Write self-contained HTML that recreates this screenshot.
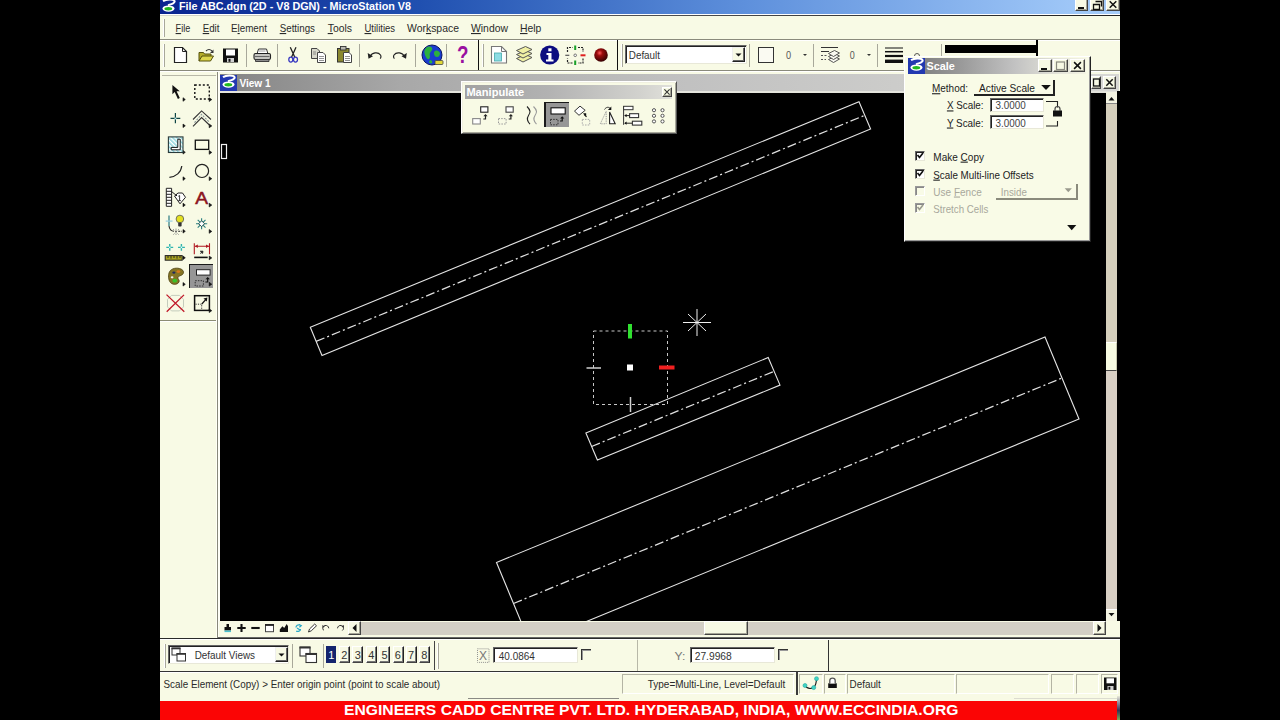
<!DOCTYPE html>
<html><head><meta charset="utf-8"><title>MicroStation V8</title>
<style>
*{box-sizing:border-box;margin:0;padding:0}
html,body{width:1280px;height:720px;overflow:hidden;background:#000}
body{font-family:"Liberation Sans",sans-serif;font-size:11px;color:#1a1a1a;position:relative}
.a,.btn,.sunk{position:absolute}
.btn{background:#f7f9e4;border:1px solid;border-color:#fff #444 #444 #fff;box-shadow:inset -1px -1px 0 #a4a496}
.sunk{background:#fff;border:1px solid;border-color:#666 #e8e8d8 #e8e8d8 #666;box-shadow:inset 1px 1px 0 #222}
svg text{font-family:"Liberation Sans",sans-serif;white-space:pre}
</style></head><body>
<div class="a" style="left:160px;top:0px;width:960px;height:720px;background:#f8fae5"></div>
<div class="a" style="left:160px;top:0px;width:960px;height:14px;background:linear-gradient(90deg,#0a2490 0%,#2050b0 27%,#5e90dc 61%,#a0c8f8 96%,#a6ccf9 100%)"></div>
<div class="a" style="left:160px;top:14px;width:960px;height:1px;background:#fff"></div>
<div class="a" style="left:160px;top:15px;width:960px;height:1px;background:linear-gradient(90deg,#d8d8cc 0%,#b0b0a4 25%,#555 45%,#222 100%)"></div>
<div class="btn" style="left:1075px;top:-3px;width:13px;height:14px;"></div>
<div class="btn" style="left:1090px;top:-3px;width:14px;height:14px;"></div>
<div class="btn" style="left:1106px;top:-3px;width:14px;height:14px;"></div>
<div class="a" style="left:160px;top:39px;width:960px;height:1px;background:#8a8a7c"></div>
<div class="a" style="left:160px;top:40px;width:960px;height:1px;background:#fff"></div>
<div class="a" style="left:160px;top:70px;width:960px;height:1px;background:#8a8a7c"></div>
<div class="a" style="left:160px;top:71px;width:960px;height:1px;background:#fff"></div>
<div class="a" style="left:163px;top:19px;width:1px;height:18px;background:#fff;border-right:1px solid #a8a89a;width:2px"></div>
<div class="a" style="left:163px;top:44px;width:1px;height:23px;background:#fff;border-right:1px solid #a8a89a;width:2px"></div>
<div class="a" style="left:246px;top:44px;width:1px;height:23px;background:#a8a89a"></div>
<div class="a" style="left:277px;top:44px;width:1px;height:23px;background:#a8a89a"></div>
<div class="a" style="left:359px;top:44px;width:1px;height:23px;background:#a8a89a"></div>
<div class="a" style="left:415px;top:44px;width:1px;height:23px;background:#a8a89a"></div>
<div class="a" style="left:446px;top:44px;width:1px;height:23px;background:#a8a89a"></div>
<div class="a" style="left:478px;top:40px;width:1px;height:30px;background:#111"></div>
<div class="a" style="left:482px;top:44px;width:2px;height:23px;background:#fff;border-right:1px solid #a8a89a"></div>
<div class="a" style="left:617px;top:40px;width:1px;height:30px;background:#111"></div>
<div class="a" style="left:621px;top:44px;width:2px;height:23px;background:#fff;border-right:1px solid #a8a89a"></div>
<div class="a" style="left:749px;top:44px;width:1px;height:23px;background:#a8a89a"></div>
<div class="a" style="left:813px;top:44px;width:1px;height:23px;background:#a8a89a"></div>
<div class="a" style="left:877px;top:44px;width:1px;height:23px;background:#a8a89a"></div>
<div class="a" style="left:941px;top:44px;width:1px;height:23px;background:#a8a89a"></div>
<div class="sunk" style="left:625px;top:45px;width:122px;height:19px;"></div>
<div class="btn" style="left:732px;top:47px;width:13px;height:15px;border-color:#eee #222 #222 #eee;box-shadow:inset -1px -1px 0 #666"></div>
<div class="a" style="left:758px;top:47px;width:16px;height:16px;border:1px solid #333;background:#fafaf2"></div>
<div class="a" style="left:945px;top:45px;width:91px;height:8px;background:#000"></div>
<div class="a" style="left:1036px;top:40px;width:2px;height:28px;background:#000"></div>
<div class="a" style="left:162px;top:75px;width:54px;height:1px;background:#b8b8a8"></div>
<div class="a" style="left:189px;top:264px;width:24px;height:24px;background:#969696;border-left:1px solid #1a1a1a;border-top:1px solid #1a1a1a"></div>
<div class="a" style="left:160px;top:320px;width:57px;height:1px;background:#8c8c74"></div>
<div class="a" style="left:160px;top:321px;width:57px;height:1px;background:#fff"></div>
<div class="a" style="left:216px;top:76px;width:1px;height:562px;background:#fffff6"></div>
<div class="a" style="left:217px;top:72px;width:1px;height:566px;background:#88887a"></div>
<div class="a" style="left:218px;top:72px;width:2px;height:566px;background:#fdfdf6"></div>
<div class="a" style="left:219px;top:72px;width:900px;height:2px;background:#f8fae5"></div>
<div class="a" style="left:220px;top:74px;width:899px;height:17px;background:linear-gradient(90deg,#848484 0%,#a8a8a8 20%,#c0c0c0 50%,#d8d8d4 100%)"></div>
<div class="btn" style="left:1091px;top:76px;width:10px;height:13px;"></div>
<div class="btn" style="left:1103px;top:76px;width:13px;height:13px;"></div>
<div class="a" style="left:220px;top:91px;width:899px;height:2px;background:#e4e4dc"></div>
<div class="a" style="left:220px;top:93px;width:886px;height:528px;background:#000"></div>
<div class="a" style="left:1106px;top:93px;width:11px;height:528px;background:#d5cfbc"></div>
<div class="a" style="left:1106px;top:370px;width:11px;height:239px;background:#d8cfc4"></div>
<div class="a" style="left:1106px;top:342px;width:11px;height:29px;background:#f7fae2;border-right:1px solid #c8c8b0;border-bottom:1px solid #444;border-top:1px solid #fff"></div>
<div class="a" style="left:1106px;top:92px;width:11px;height:12px;background:#f4f4e2;border-bottom:1px solid #888"></div>
<div class="a" style="left:1106px;top:609px;width:11px;height:12px;background:#f4f4e2;border-top:1px solid #fff"></div>
<div class="a" style="left:1117px;top:91px;width:3px;height:530px;background:#000"></div>
<div class="a" style="left:219px;top:621px;width:898px;height:17px;background:#f8fae5"></div>
<div class="a" style="left:361px;top:622px;width:732px;height:13px;background:#d3cfc5"></div>
<div class="btn" style="left:704px;top:621px;width:44px;height:14px;border-color:#fff #444 #444 #fff"></div>
<div class="btn" style="left:348px;top:621px;width:13px;height:14px;"></div>
<div class="btn" style="left:1093px;top:621px;width:13px;height:14px;"></div>
<div class="a" style="left:461px;top:81px;width:216px;height:53px;background:#f8fae5;border:1px solid;border-color:#fff #555 #555 #fff;box-shadow:inset 1px 1px 0 #f0f0e0,inset -1px -1px 0 #a8a89a"></div>
<div class="a" style="left:465px;top:85px;width:207px;height:14px;background:linear-gradient(90deg,#a2a2a2 0%,#b2b2b2 40%,#d2d2ce 85%,#e0e0da 100%)"></div>
<div class="btn" style="left:662px;top:87px;width:10px;height:10px;"></div>
<div class="a" style="left:544px;top:102px;width:25px;height:25px;background:#969696;border-left:2px solid #1a1a1a;border-top:1px solid #1a1a1a"></div>
<div class="a" style="left:904px;top:56px;width:187px;height:186px;background:#f9fbe7;border:1px solid;border-color:#fff #222 #222 #fff;box-shadow:inset -1px -1px 0 #999"></div>
<div class="a" style="left:908px;top:58px;width:178px;height:16px;background:linear-gradient(90deg,#787878 0%,#9a9a9a 30%,#c2c2c2 60%,#e4e4da 85%,#f4f4e4 100%)"></div>
<div class="btn" style="left:1038px;top:59px;width:14px;height:13px;"></div>
<div class="btn" style="left:1053px;top:59px;width:15px;height:13px;"></div>
<div class="btn" style="left:1070px;top:59px;width:15px;height:13px;"></div>
<div class="a" style="left:974px;top:80px;width:81px;height:16px;border-right:2px solid #222;border-bottom:2px solid #222"></div>
<div class="sunk" style="left:990px;top:98px;width:54px;height:14px;"></div>
<div class="sunk" style="left:990px;top:115px;width:54px;height:14px;"></div>
<div class="sunk" style="left:915px;top:151px;width:10px;height:10px;"></div>
<div class="sunk" style="left:915px;top:169px;width:10px;height:10px;"></div>
<div class="sunk" style="left:915px;top:186px;width:10px;height:10px;background:#f9fbe7;box-shadow:inset 1px 1px 0 #888;border-color:#999 #fff #fff #999"></div>
<div class="sunk" style="left:915px;top:203px;width:10px;height:10px;background:#f9fbe7;box-shadow:inset 1px 1px 0 #888;border-color:#999 #fff #fff #999"></div>
<div class="a" style="left:996px;top:184px;width:82px;height:16px;border-right:2px solid #8a8a7c;border-bottom:2px solid #8a8a7c"></div>
<div class="a" style="left:160px;top:638px;width:960px;height:1px;background:#2a2a2a"></div>
<div class="a" style="left:218px;top:637px;width:902px;height:1px;background:#666"></div>
<div class="a" style="left:160px;top:639px;width:960px;height:1px;background:#fff"></div>
<div class="a" style="left:164px;top:644px;width:2px;height:24px;background:#fff;border-right:1px solid #a8a89a"></div>
<div class="sunk" style="left:168px;top:645px;width:121px;height:19px;"></div>
<div class="btn" style="left:275px;top:647px;width:13px;height:15px;border-color:#eee #222 #222 #eee;box-shadow:inset -1px -1px 0 #666"></div>
<div class="a" style="left:292px;top:644px;width:1px;height:24px;background:#a8a89a"></div>
<div class="a" style="left:323px;top:644px;width:1px;height:24px;background:#a8a89a"></div>
<div class="a" style="left:434px;top:641px;width:1px;height:29px;background:#444"></div>
<div class="a" style="left:437px;top:643px;width:2px;height:26px;background:#fff;border-right:1px solid #a8a89a"></div>
<div class="a" style="left:326px;top:646px;width:10px;height:17px;background:#14246e"></div>
<div class="btn" style="left:339px;top:646px;width:11px;height:17px;border-right:1px solid #222;box-shadow:inset -1px -1px 0 #777"></div>
<div class="btn" style="left:352px;top:646px;width:11px;height:17px;border-right:1px solid #222;box-shadow:inset -1px -1px 0 #777"></div>
<div class="btn" style="left:366px;top:646px;width:11px;height:17px;border-right:1px solid #222;box-shadow:inset -1px -1px 0 #777"></div>
<div class="btn" style="left:379px;top:646px;width:11px;height:17px;border-right:1px solid #222;box-shadow:inset -1px -1px 0 #777"></div>
<div class="btn" style="left:393px;top:646px;width:11px;height:17px;border-right:1px solid #222;box-shadow:inset -1px -1px 0 #777"></div>
<div class="btn" style="left:406px;top:646px;width:11px;height:17px;border-right:1px solid #222;box-shadow:inset -1px -1px 0 #777"></div>
<div class="btn" style="left:419px;top:646px;width:11px;height:17px;border-right:1px solid #222;box-shadow:inset -1px -1px 0 #777"></div>
<div class="sunk" style="left:493px;top:647px;width:85px;height:16px;"></div>
<div class="sunk" style="left:690px;top:647px;width:85px;height:16px;"></div>
<div class="a" style="left:581px;top:649px;width:10px;height:11px;border-left:1px solid #333;border-top:1px solid #333;box-shadow:inset 1px 1px 0 #999"></div>
<div class="a" style="left:778px;top:649px;width:10px;height:11px;border-left:1px solid #333;border-top:1px solid #333;box-shadow:inset 1px 1px 0 #999"></div>
<div class="a" style="left:637px;top:640px;width:1px;height:31px;background:#b8b8a8"></div>
<div class="a" style="left:828px;top:640px;width:1px;height:31px;background:#333"></div>
<div class="a" style="left:160px;top:671px;width:960px;height:1px;background:#333"></div>
<div class="a" style="left:160px;top:672px;width:960px;height:1px;background:#fff"></div>
<div class="a" style="left:622px;top:674px;width:172px;height:20px;border:1px solid;border-color:#b4b4a4 #fff #fff #b4b4a4"></div>
<div class="a" style="left:847px;top:674px;width:108px;height:20px;border:1px solid;border-color:#b4b4a4 #fff #fff #b4b4a4"></div>
<div class="a" style="left:956px;top:674px;width:93px;height:20px;border:1px solid;border-color:#b4b4a4 #fff #fff #b4b4a4"></div>
<div class="a" style="left:1051px;top:674px;width:23px;height:20px;border:1px solid;border-color:#b4b4a4 #fff #fff #b4b4a4"></div>
<div class="a" style="left:1076px;top:674px;width:23px;height:20px;border:1px solid;border-color:#b4b4a4 #fff #fff #b4b4a4"></div>
<div class="a" style="left:1101px;top:674px;width:17px;height:20px;border:1px solid;border-color:#b4b4a4 #fff #fff #b4b4a4"></div>
<div class="a" style="left:796px;top:671px;width:2px;height:24px;background:#3a3a3a"></div>
<div class="a" style="left:799px;top:674px;width:24px;height:20px;border:1px solid;border-color:#b4b4a4 #fff #fff #b4b4a4"></div>
<div class="a" style="left:824px;top:674px;width:22px;height:20px;border:1px solid;border-color:#b4b4a4 #fff #fff #b4b4a4"></div>
<div class="a" style="left:468px;top:698px;width:151px;height:1px;background:#8a8a84"></div>
<div class="a" style="left:1014px;top:698px;width:103px;height:1px;background:#dcdcd0"></div>
<div class="a" style="left:160px;top:701px;width:957px;height:19px;background:#fb0505"></div>
<div class="a" style="left:1117px;top:696px;width:3px;height:24px;background:linear-gradient(180deg,#e8e8d8 0%,#889 30%,#335 60%,#7a5 100%)"></div>
<svg class="a" style="left:0;top:0" width="1280" height="720" viewBox="0 0 1280 720">
<defs><clipPath id="cv"><rect x="220" y="93" width="886" height="528"/></clipPath></defs>
<g clip-path="url(#cv)" fill="none" stroke="#e4e4e4" stroke-width="1.1">
<polygon points="310.3,327.2 859.0,101.7 870.6,129.0 322.0,355.5"/>
<line x1="316.1" y1="341.4" x2="864.8" y2="115.3" stroke-dasharray="9 3 2 3" stroke="#e0e0e0" stroke-width="1.25"/>
<polygon points="585.9,433.0 768.2,357.5 780.0,385.1 597.4,460.0"/>
<line x1="591.6" y1="446.5" x2="774.1" y2="371.3" stroke-dasharray="9 3 2 3" stroke="#e0e0e0" stroke-width="1.25"/>
<polygon points="496.5,562.5 1045.0,337.0 1079.0,419.0 530.5,644.5"/>
<line x1="513.5" y1="603.5" x2="1062.0" y2="378.0" stroke-dasharray="9 3 2 3" stroke="#e0e0e0" stroke-width="1.25"/>
</g>
<rect x="593.5" y="331" width="74" height="73.5" fill="none" stroke="#c8c8c8" stroke-width="1" stroke-dasharray="3 3"/>
<rect x="627" y="364.5" width="6" height="6" fill="#fff"/>
<rect x="628" y="324" width="4" height="14.5" fill="#30e030"/>
<rect x="659" y="365.5" width="15.5" height="4" fill="#f02020"/>
<path d="M586.5,368h14.500M630.500,397v15" stroke="#d0d0d0" stroke-width="1.500"/>
<path d="M683,322.5h28M697,309v27M688,314l18,17M706,314l-18,17" stroke="#f0f0f0" stroke-width="1" fill="none"/>
<rect x="221.5" y="144.500" width="5" height="14" fill="none" stroke="#f0f0f0" stroke-width="1.2"/>
<g transform="translate(160,-1)">
<path d="M3,2.2 C6,0.2 13,-0.2 14.5,2 C15.5,4 11,5.2 8,6.2" fill="none" stroke="#fff" stroke-width="2"/>
<ellipse cx="8.5" cy="9.6" rx="6" ry="3.2" fill="#fff"/>
<ellipse cx="8.3" cy="9.7" rx="3.9" ry="1.7" fill="#20b820"/>
</g>
<g transform="translate(220,75)">
<rect x="0" y="0" width="17" height="16" fill="#2238b0"/>
<path d="M3,2.2 C6,0.2 13,-0.2 14.5,2 C15.5,4 11,5.2 8,6.2" fill="none" stroke="#fff" stroke-width="2"/>
<ellipse cx="8.5" cy="9.6" rx="6" ry="3.2" fill="#fff"/>
<ellipse cx="8.3" cy="9.7" rx="3.9" ry="1.7" fill="#20b820"/>
</g>
<g transform="translate(908,58)">
<rect x="0" y="0" width="17" height="16" fill="#2238b0"/>
<path d="M3,2.2 C6,0.2 13,-0.2 14.5,2 C15.5,4 11,5.2 8,6.2" fill="none" stroke="#fff" stroke-width="2"/>
<ellipse cx="8.5" cy="9.6" rx="6" ry="3.2" fill="#fff"/>
<ellipse cx="8.3" cy="9.7" rx="3.9" ry="1.7" fill="#20b820"/>
</g>
<rect x="1078" y="7" width="6" height="2" fill="#111"/>
<path d="M1095.5,1.500h6v5M1093.5,4.500h6v5h-6z" fill="none" stroke="#111" stroke-width="1.3"/>
<path d="M1109.7,1.2000000000000002L1116.3,7.8M1116.3,1.2000000000000002L1109.7,7.8" stroke="#111" stroke-width="1.5" fill="none"/>
<rect x="1093.5" y="79" width="6" height="7" fill="none" stroke="#111" stroke-width="1.3"/>
<path d="M1106.3,79.3L1112.7,85.7M1112.7,79.3L1106.3,85.7" stroke="#111" stroke-width="1.5" fill="none"/>
<path d="M664.4,89.4L669.6,94.6M669.6,89.4L664.4,94.6" stroke="#333" stroke-width="1.1" fill="none"/>
<rect x="1041" y="68" width="6" height="2" fill="#111"/>
<rect x="1056.5" y="62" width="8" height="7.500" fill="none" stroke="#8a8a80" stroke-width="1.2"/>
<path d="M1074.1,62.1L1080.9,68.9M1080.9,62.1L1074.1,68.9" stroke="#111" stroke-width="1.5" fill="none"/>
<polygon points="735.5,53.5 741.5,53.5 738.5,56.5" fill="#111"/>
<polygon points="803,54 807,54 805,56" fill="#333"/>
<polygon points="867,54 871,54 869,56" fill="#333"/>
<polygon points="1041.2,85 1050.8,85 1046,90" fill="#111"/>
<polygon points="1064.7,188.3 1071.8999999999999,188.3 1068.3,192.3" fill="#9a9a8e"/>
<polygon points="1067.1000000000001,225 1076.3,225 1071.7,230.2" fill="#111"/>
<polygon points="278.5,653.5 284.5,653.5 281.5,656.5" fill="#111"/>
<polygon points="1108.500,100.500 1114.500,100.500 1111.500,97" fill="#111"/>
<polygon points="1108.5,613 1114.5,613 1111.5,616.2" fill="#111"/>
<polygon points="356.5,624 352.5,628 356.5,632" fill="#111"/>
<polygon points="1097.5,624 1101.5,628 1097.5,632" fill="#111"/>
<path d="M917.5,155l2,2.500l3.500,-4.500" fill="none" stroke="#111" stroke-width="1.7"/>
<path d="M917.5,173l2,2.500l3.500,-4.500" fill="none" stroke="#111" stroke-width="1.7"/>
<path d="M917.5,207l2,2.500l3.500,-4.500" fill="none" stroke="#9a9a8e" stroke-width="1.7"/>
<path d="M1046,101.500h11.500v6M1046,126h11.500v-5" fill="none" stroke="#222" stroke-width="1.1"/>
<rect x="1053" y="110.500" width="9" height="6" fill="#111"/><path d="M1055,111v-2a2.500,2.500 0 0 1 5,0v2" fill="none" stroke="#444" stroke-width="1.2"/>
<!-- ===== main toolbar icons ===== -->
<g id="tb" stroke-linejoin="miter">
<!-- new -->
<path d="M174.500,47.500h8l4,4v11h-12z" fill="#fff" stroke="#222" stroke-width="1.2"/><path d="M182.500,47.500v4h4" fill="none" stroke="#222" stroke-width="1"/>
<!-- open -->
<path d="M199,61v-8.500h4.500l1,1.500h6.500v2" fill="#b4ac28" stroke="#55500c" stroke-width="1"/>
<path d="M199,61l3,-5h11.500l-3,5z" fill="#ddd64a" stroke="#55500c" stroke-width="1"/>
<path d="M206,51q3,-3 6,0" fill="none" stroke="#333" stroke-width="1.1"/><path d="M213.500,49.500v3.500h-3.500z" fill="#333"/>
<!-- save -->
<rect x="223" y="48.500" width="15" height="14" fill="#111"/><rect x="226" y="49.500" width="9" height="6" fill="#fff"/><rect x="227" y="58" width="7" height="4" fill="#d0d0d0"/><rect x="228.500" y="58.800" width="2" height="3" fill="#111"/>
<!-- print -->
<path d="M257,54l1.500,-5h8l1.500,5" fill="#fff" stroke="#333" stroke-width="1"/>
<rect x="254" y="53.500" width="16.500" height="6" rx="1.500" fill="#c4c4c0" stroke="#222" stroke-width="1.100"/><path d="M255,56.500h14.500" stroke="#666" stroke-width="1"/>
<path d="M255.500,59.500h13.500v2h-13.500z" fill="#8c8c8c" stroke="#333" stroke-width="0.900"/><path d="M259,51h6.500" stroke="#888" stroke-width="0.800"/>
<!-- cut -->
<path d="M290.300,47.200l4.500,10M296,47.200l-4.500,10" stroke="#222" stroke-width="1.300" fill="none"/>
<ellipse cx="290.800" cy="59.600" rx="2" ry="2.500" fill="none" stroke="#3838c0" stroke-width="1.300"/><ellipse cx="295.500" cy="59.600" rx="2" ry="2.500" fill="none" stroke="#3838c0" stroke-width="1.300"/>
<!-- copy -->
<path d="M311.500,48.500h5.500l2.500,2.500v7.500h-8z" fill="#d8d8cc" stroke="#444" stroke-width="1"/>
<path d="M317.500,52.500h5.500l2.500,2.500v7.500h-8z" fill="#fff" stroke="#444" stroke-width="1"/><path d="M319,56.500h5M319,58.500h5M319,60.500h5M313,52h3M313,54h3" stroke="#777" stroke-width="0.800"/>
<!-- paste -->
<rect x="337.500" y="48.500" width="11.500" height="13.500" fill="#8a8830" stroke="#333" stroke-width="1"/><rect x="340.500" y="46.500" width="5.500" height="3.500" fill="#b8b8b0" stroke="#333" stroke-width="0.900"/>
<path d="M343.500,52.500h5.500l2.500,2.500v7.500h-8z" fill="#fff" stroke="#444" stroke-width="1"/><path d="M345,56.500h5M345,58.500h5M345,60.500h5" stroke="#777" stroke-width="0.800"/>
<!-- undo / redo -->
<path d="M370,56.500c2,-4 8,-5 10.500,-1.500c0.800,1.200 0.500,3 -0.500,3.500" fill="none" stroke="#222" stroke-width="1.200"/><path d="M367.700,53l0.800,5.800l4.500,-2.500z" fill="#222"/>
<path d="M404.500,56.500c-2,-4 -8,-5 -10.500,-1.500c-0.800,1.200 -0.500,3 0.500,3.500" fill="none" stroke="#222" stroke-width="1.200"/><path d="M406.800,53l-0.800,5.800l-4.500,-2.500z" fill="#222"/>
<!-- globe -->
<circle cx="432" cy="55" r="10" fill="#1a3cd0" stroke="#0a1460" stroke-width="1"/>
<path d="M426,48c2,-2 5,-2 6,0c1,2 -1,3 -2,5c-1,2 1,4 -1,6c-2,1 -3,-2 -4,-4c-1,-3 -1,-5 1,-7z" fill="#2cb040"/>
<path d="M435,51c2,-1 4,0 5,2c0,2 -1,4 -3,4c-2,0 -3,-2 -3,-3.500c0,-1 0,-2 1,-2.500z" fill="#2cb040"/><path d="M430,60c1,0 3,1 2,3c-1,1 -3,0 -3,-1z" fill="#2cb040"/>
<rect x="435" y="60.500" width="8" height="4" rx="1" fill="#e0d838" stroke="#444" stroke-width="0.800"/>
<!-- page cyan -->
<path d="M491.500,46.500h10l5,5v11.500h-15z" fill="#fff" stroke="#777" stroke-width="1.100"/><path d="M501.500,46.500v5h5" fill="none" stroke="#777" stroke-width="1"/>
<rect x="494.500" y="53" width="7" height="8" fill="#8cdce4" stroke="#4aa" stroke-width="0.800"/>
<!-- layers -->
<g fill="#f0f0a4" stroke="#555" stroke-width="1"><path d="M516.500,58.500l9,-4l6.500,3l-9,4.500z"/><path d="M516.500,54.500l9,-4l6.500,3l-9,4.500z"/><path d="M516.500,50.500l9,-4l6.500,3l-9,4.500z"/></g>
<!-- info -->
<circle cx="549.700" cy="55" r="9.600" fill="#0c0c80"/>
<rect x="548.300" y="48.300" width="3.200" height="3" fill="#fff"/><path d="M546.500,53h5v6.500h2v2h-7.500v-2h2.300v-4.500h-1.800z" fill="#fff"/>
<!-- accusnap bracket -->
<path d="M567.500,52v-4.500h5M578,47.500h5v4.500M583,58.500v4.500h-5M572.500,63h-5v-4.500" fill="none" stroke="#222" stroke-width="1.200" stroke-dasharray="2 1"/>
<rect x="574.200" y="45.500" width="2" height="4.500" fill="#18a028"/><rect x="574.200" y="60.500" width="2" height="4.500" fill="#18a028"/><rect x="580.500" y="54.300" width="5" height="2" fill="#e02020"/><rect x="565.300" y="54.700" width="4" height="1.200" fill="#555"/>
<circle cx="575.200" cy="55.300" r="1.300" fill="#fff" stroke="#555" stroke-width="0.800"/>
<!-- red ball -->
<defs><radialGradient id="rb" cx="0.400" cy="0.350" r="0.700"><stop offset="0" stop-color="#ff5a5a"/><stop offset="0.300" stop-color="#9c0c0c"/><stop offset="1" stop-color="#2c0000"/></radialGradient></defs>
<circle cx="601" cy="55" r="6.800" fill="url(#rb)"/>
<!-- level filter icon -->
<path d="M821,47.500h17M821,51.500h8" stroke="#333" stroke-width="1" fill="none"/><path d="M821,55.500h6M821,59.500h5" stroke="#555" stroke-width="1" stroke-dasharray="2 1.500" fill="none"/>
<g fill="#f8f8f0" stroke="#444" stroke-width="0.900"><path d="M828.500,59.500l6,-3l5,2.500l-6,3.500z"/><path d="M828.500,56.500l6,-3l5,2.500l-6,3.500z"/><path d="M828.500,53.500l6,-3l5,2.500l-6,3.500z"/></g>
<!-- weights -->
<path d="M885,48h18" stroke="#111" stroke-width="1"/><path d="M885,51.700h18" stroke="#111" stroke-width="1.500"/><path d="M885,56h18" stroke="#111" stroke-width="2.200"/><path d="M885,61.300h18" stroke="#111" stroke-width="3.400"/>
<path d="M914.500,56a2.500,2.500 0 0 1 5,0" fill="none" stroke="#555" stroke-width="1"/>
</g>
<!-- ===== left toolbox ===== -->
<g id="lt">
<!-- flyout marks -->
<g fill="#111" stroke="#111" stroke-width="0.6">
<polygon points="183,97.700 185.300,99.500 183,101.300"/><polygon points="209.200,97.700 211.800,99.600 209.200,101.500"/>
<polygon points="183,124 185.300,125.800 183,127.600"/><polygon points="209.200,124 211.800,125.900 209.200,127.800"/>
<polygon points="183,150.500 185.300,152.300 183,154.100"/><polygon points="209.200,150.500 211.800,152.400 209.200,154.300"/>
<polygon points="183,176.800 185.300,178.600 183,180.400"/><polygon points="209.200,176.800 211.800,178.700 209.200,180.600"/>
<polygon points="183,203.200 185.300,205 183,206.800"/><polygon points="209.200,203.200 211.800,205.100 209.200,207"/>
<polygon points="183,229.500 185.300,231.300 183,233.100"/><polygon points="209.200,229.500 211.800,231.400 209.200,233.300"/>
<polygon points="183,256 185.300,257.800 183,259.600"/><polygon points="209.200,256 211.800,257.900 209.200,259.800"/>
<polygon points="183,282.500 185.300,284.300 183,286.100"/><polygon points="209.200,282.300 211.800,284.200 209.200,286.100"/>
<polygon points="209.200,308.800 211.800,310.700 209.200,312.600"/>
</g>
<!-- r1: arrow, fence -->
<path d="M172.400,85v9.200l2.300,-2.200l3.200,7l1.900,-0.900l-3.200,-6.800h3.200z" fill="#111"/>
<rect x="194.800" y="85" width="14.500" height="14" fill="none" stroke="#111" stroke-width="1.400" stroke-dasharray="2 2"/>
<!-- r2: point, smartline -->
<path d="M170.500,118.400h9.800M175.400,113v10.300" stroke="#0e4444" stroke-width="1.200"/><circle cx="175.400" cy="118.400" r="1" fill="#bfe8e8"/>
<path d="M193,119.500l8.600,-8.600l9.400,8.600" fill="none" stroke="#333" stroke-width="1.100"/>
<path d="M194.500,122.600l7.100,-8.300l7.800,8" fill="none" stroke="#8a9a9a" stroke-width="1.100" stroke-dasharray="2 1.200"/>
<path d="M193,126.300l8.600,-8.700l8.300,7.900" fill="none" stroke="#333" stroke-width="1.100"/>
<!-- r3: hatch, block -->
<defs><pattern id="ht" width="3" height="3" patternUnits="userSpaceOnUse" patternTransform="rotate(-45)"><rect width="3" height="3" fill="#fff"/><rect width="1.500" height="3" fill="#8cd4dc"/></pattern></defs>
<rect x="168.400" y="136.900" width="14.600" height="15.600" fill="url(#ht)" stroke="#2a3a3a" stroke-width="1.100"/>
<path d="M177.800,139.200h2.400v10.600h-9v-2.400h6.600z" fill="#fff" stroke="#111" stroke-width="1"/>
<rect x="195.300" y="140.200" width="13.400" height="9.200" fill="none" stroke="#111" stroke-width="1.300"/>
<!-- r4: arc, circle -->
<path d="M169.400,177.300C176,176.800 181,172.500 181.800,166" fill="none" stroke="#222" stroke-width="1.200"/>
<circle cx="202" cy="170.900" r="6.600" fill="none" stroke="#222" stroke-width="1.200"/>
<!-- r5: tags, text(A is text) -->
<path d="M166.300,188.300h5.300v18h-5.300zM166.300,191.300h5.300M166.300,194.300h5.300M166.300,197.300h5.300M166.300,200.300h5.300M166.300,203.300h5.300" fill="#fff" stroke="#222" stroke-width="1"/>
<path d="M171.600,191.500l4.200,3.500" stroke="#222" stroke-width="1"/>
<path d="M174.500,196l3.500,-3h4.500l3,4.300l-5.500,6.500z" fill="#fff" stroke="#222" stroke-width="1"/><path d="M178.300,196.300l1.300,-0.800v5M178.300,200.600h2.600" fill="none" stroke="#222" stroke-width="0.900"/><circle cx="176.200" cy="195.200" r="0.900" fill="#111"/>
<!-- r6: bulb, sun -->
<path d="M169,215.500v10.500" stroke="#2a7a80" stroke-width="1.200"/><path d="M165.700,221.100h6.800" stroke="#9ad0e0" stroke-width="1.200"/>
<path d="M169,226c0.500,3.500 2.500,5.200 5,5.300" fill="none" stroke="#222" stroke-width="1.100"/><path d="M175,231.300h7" stroke="#222" stroke-width="1.100" stroke-dasharray="2 1.200"/>
<path d="M173,229l6,6M179,229l-6,6M176,228.500v7" stroke="#777" stroke-width="0.700" stroke-dasharray="1.500 1"/>
<circle cx="179.900" cy="219" r="3.800" fill="#e4e020" stroke="#555" stroke-width="0.800"/><rect x="178.200" y="222.400" width="3.400" height="4.200" rx="0.800" fill="#333"/>
<path d="M196,223.750h11.200M201.600,218.200v11.100M197.700,219.800l7.800,7.900M205.500,219.800l-7.800,7.900" stroke="#2a8080" stroke-width="1.100"/><rect x="199.500" y="221.650" width="4.200" height="4.200" fill="#fff" stroke="#1a4a4a" stroke-width="0.900" transform="rotate(45 201.600 223.750)"/>
<!-- r7: measure, dimension -->
<path d="M166.300,247.400h6.900M169.750,244v6.800M178,247.400h6.900M181.400,244v6.800" stroke="#30b4ac" stroke-width="1.400"/><circle cx="169.750" cy="247.400" r="0.800" fill="#dff"/><circle cx="181.400" cy="247.400" r="0.800" fill="#dff"/>
<rect x="165.200" y="255.600" width="17" height="4.600" fill="#a8a420" stroke="#222" stroke-width="1"/><path d="M168,256v2M171,256v2.600M174,256v2M177,256v2.600M180,256v2" stroke="#222" stroke-width="0.900"/>
<path d="M194.300,243.300v11M209.500,243.300v11M195,246.300h14" stroke="#b01822" stroke-width="1.100" fill="none"/><path d="M194.800,246.300l3,-1.800v3.600zM209,246.300l-3,-1.800v3.600z" fill="#b01822"/>
<path d="M194.200,257.400h13.500" stroke="#111" stroke-width="1.600"/><path d="M200.500,254l1.300,-2.500M200.300,251.200h2.700l-0.400,2.200z" stroke="#222" stroke-width="0.800" fill="#222"/>
<!-- r8: palette, (selected) scale -->
<path d="M169,273c1,-4 6,-5.600 10.500,-4.500c4,1 5,4 3,6c-1.500,1.500 -4,1 -4.500,3c-0.500,1.500 2,2.500 1,4.500c-1,2.500 -5,3 -7.500,1.500c-3,-2 -3.500,-7 -2.500,-10.500z" fill="#857524" stroke="#4a4010" stroke-width="0.800"/>
<ellipse cx="178.400" cy="271.600" rx="1.900" ry="1.300" fill="#d8781c"/><ellipse cx="173.900" cy="272.600" rx="1.500" ry="1.200" fill="#222a60"/><ellipse cx="172.100" cy="277.300" rx="1.400" ry="1.100" fill="#f4f4f4"/><ellipse cx="174.800" cy="280.700" rx="2.400" ry="1.900" fill="#38c028"/>
<rect x="196.500" y="269.700" width="13.600" height="5.400" fill="#fff" stroke="#222" stroke-width="1"/>
<rect x="195.200" y="280.700" width="8.200" height="5.300" fill="none" stroke="#333" stroke-width="1" stroke-dasharray="1.500 1.200"/>
<path d="M205.400,282h2.300v-3.500" fill="none" stroke="#111" stroke-width="1.200"/><path d="M205.500,279.200l2.200,-2.200l2.200,2.200z" fill="#111"/>
<!-- r9: delete, change -->
<path d="M171.500,295.400h8l4,4v7.500l-4,4h-8l-4,-4v-7.500z" fill="none" stroke="#c4ccbc" stroke-width="1"/>
<path d="M166.500,294.600l17.800,17.100M184,294.900l-17.300,16.900" stroke="#c01828" stroke-width="1.300"/>
<rect x="194.600" y="295.700" width="14.800" height="14.700" fill="none" stroke="#111" stroke-width="1.500"/>
<path d="M201.800,304l4.600,-5.200" stroke="#111" stroke-width="1.200"/><path d="M207.400,297.600l-0.600,4l-3.300,-3.200z" fill="#111"/>
<path d="M195.500,304.200h6.200v5.500" fill="none" stroke="#333" stroke-width="1" stroke-dasharray="1.200 1.200"/>
</g>
<!-- ===== Manipulate icons ===== -->
<g id="mp">
<rect x="480.700" y="106.800" width="7.200" height="5.400" fill="#fff" stroke="#222" stroke-width="1.100"/><rect x="472.700" y="118.600" width="7.600" height="5.400" fill="#fff" stroke="#888" stroke-width="1.100"/>
<path d="M483.300,119h2.200v-3.400" fill="none" stroke="#222" stroke-width="1.200"/><path d="M483.400,116.300l2.100,-2.200l2.100,2.200z" fill="#222"/>
<rect x="506" y="106.800" width="7.200" height="5.400" fill="#fff" stroke="#444" stroke-width="1.100"/><rect x="498.500" y="118.600" width="7.600" height="5.400" fill="none" stroke="#999" stroke-width="1" stroke-dasharray="1.500 1.200"/>
<path d="M508.700,119h2.200v-3.400" fill="none" stroke="#222" stroke-width="1.200"/><path d="M508.800,116.300l2.100,-2.200l2.100,2.200z" fill="#222"/>
<path d="M527,106.500c4,4 3.500,6 1.500,9c-2,3 -1.500,5.500 1.500,8.700" fill="none" stroke="#222" stroke-width="1.100"/><path d="M533.500,106.500c4,4 3.500,6 1.500,9c-2,3 -1.500,5.500 1.500,8.700" fill="none" stroke="#999" stroke-width="1.100"/>
<rect x="551" y="107.800" width="14.200" height="6.200" fill="#fff" stroke="#111" stroke-width="1.100"/><rect x="550.500" y="119.400" width="7.500" height="5.400" fill="none" stroke="#333" stroke-width="1" stroke-dasharray="1.500 1.200"/>
<path d="M560,121h2.200v-3.200" fill="none" stroke="#111" stroke-width="1.200"/><path d="M560.100,118.500l2.100,-2.200l2.100,2.200z" fill="#111"/>
<path d="M574.500,111.100l5.500,-5l5.200,4.200l-6.200,5z" fill="#fff" stroke="#333" stroke-width="1"/><path d="M583,113.300h3.200v3.200z" fill="#111"/><path d="M584,114.300l2.500,2.500" stroke="#111" stroke-width="1.100"/>
<rect x="582.300" y="119.400" width="7.400" height="5.600" fill="none" stroke="#aaa" stroke-width="1" stroke-dasharray="1.500 1.200"/>
<path d="M600.300,123.800l5.900,-12.500v12.500z" fill="none" stroke="#999" stroke-width="1" stroke-dasharray="1.300 1"/><path d="M609.600,112v11.800h5.600z" fill="#fff" stroke="#222" stroke-width="1.100"/>
<path d="M604.500,109.500c1.500,-2.500 4,-2.800 5.500,-1.300" fill="none" stroke="#333" stroke-width="1"/><path d="M611.300,106.600v3.400h-3.400z" fill="#111"/>
<path d="M623.600,106v18.800" stroke="#333" stroke-width="1"/><rect x="623.600" y="106.300" width="9.400" height="3.400" fill="#fff" stroke="#333" stroke-width="1"/><rect x="629.600" y="113.700" width="9" height="3.900" fill="#fff" stroke="#333" stroke-width="1.100"/><rect x="632.400" y="121.200" width="9.400" height="3.900" fill="#fff" stroke="#333" stroke-width="1.100"/>
<path d="M625,115.600h4.500M625,123.200h7" stroke="#222" stroke-width="1"/><path d="M624.200,115.600l2.400,-1.600v3.200zM624.200,123.200l2.400,-1.600v3.200z" fill="#111"/>
<g fill="#fff" stroke="#444" stroke-width="0.900"><circle cx="654" cy="110.200" r="1.600"/><circle cx="662.500" cy="110.200" r="1.600"/><circle cx="654" cy="115.800" r="1.600"/><circle cx="662.500" cy="115.800" r="1.600"/><circle cx="654" cy="121.400" r="1.600"/><circle cx="662.500" cy="121.400" r="1.600"/></g>
</g>
<!-- ===== view controls ===== -->
<g id="vc">
<path d="M226.500,624v3h-2v3.500h6.500v-3.500h-2v-3z" fill="#111"/><rect x="224.500" y="630.500" width="6.500" height="1.600" fill="#48c0d0"/>
<path d="M237.300,628h8.400M241.500,624v8" stroke="#111" stroke-width="2.100"/>
<path d="M251.300,628h8.400" stroke="#111" stroke-width="2.100"/>
<rect x="265.500" y="624.500" width="8" height="7.200" fill="#fff" stroke="#444" stroke-width="1"/><path d="M265,625h9" stroke="#222" stroke-width="1.800"/>
<path d="M279.800,632v-2.500l2.600,-3.200l1.800,1.800l2.500,-4l1.300,2.200v5.700z" fill="#111"/>
<path d="M296,627.500c0,-2 2,-3.200 3.800,-2.500M300.500,629c0,2 -2.500,3 -4.300,2M299,624.500l2.200,1.200l-1.800,1.500M297,628l3,2" fill="none" stroke="#28a8c8" stroke-width="1.300"/>
<path d="M308.500,632l1,-3l5.200,-5l1.800,1.800l-5.200,5z" fill="#fff" stroke="#222" stroke-width="0.900"/>
<path d="M324,630.500c-2,-1.500 -1.500,-4.500 1,-5c2,-0.400 3.600,0.800 3.800,2.800" fill="none" stroke="#333" stroke-width="1"/><path d="M322.300,625l0.200,2.800l2.500,-1z" fill="#333"/>
<path d="M342.300,630.500c2,-1.500 1.500,-4.500 -1,-5c-2,-0.400 -3.600,0.800 -3.800,2.800" fill="none" stroke="#333" stroke-width="1"/><path d="M344,625l-0.200,2.800l-2.500,-1z" fill="#333"/>
</g>
<!-- ===== bottom bar icons ===== -->
<g id="bb">
<rect x="172" y="648" width="8" height="7" fill="#fff" stroke="#333" stroke-width="1"/><path d="M171.500,648.500h9" stroke="#333" stroke-width="1.600"/><rect x="177" y="653.500" width="8.500" height="7.500" fill="#fff" stroke="#333" stroke-width="1"/><path d="M176.500,654h9.500" stroke="#333" stroke-width="1.600"/>
<rect x="300" y="647" width="10" height="9" fill="#fff" stroke="#333" stroke-width="1.100"/><path d="M299.500,647.600h11" stroke="#333" stroke-width="1.800"/><rect x="306" y="653.500" width="10.500" height="9" fill="#fff" stroke="#333" stroke-width="1.100"/><path d="M305.500,654.100h11.500" stroke="#333" stroke-width="1.800"/>
<rect x="477.500" y="648.800" width="11.500" height="13.600" fill="none" stroke="#888" stroke-width="0.900" stroke-dasharray="1 1"/>
<!-- status: snap icon, lock, save -->
<path d="M805,685.500c2,3 5.500,3.500 8.700,2.100c2.300,-2.500 2.800,-5.500 2.800,-9" fill="none" stroke="#111" stroke-width="1.100"/><circle cx="805" cy="685.500" r="2" fill="#40d4c4" stroke="#20a8a0" stroke-width="0.600"/><circle cx="813.700" cy="687.600" r="2" fill="#40d4c4" stroke="#20a8a0" stroke-width="0.600"/><circle cx="816.500" cy="678.700" r="2" fill="#40d4c4" stroke="#20a8a0" stroke-width="0.600"/>
<rect x="828.200" y="683.300" width="8.600" height="4.700" fill="#111"/><path d="M829.800,683.500v-3a2.600,2.300 0 0 1 5.400,0v3" fill="#fff" stroke="#555" stroke-width="1.300"/>
<rect x="1104" y="677.500" width="12.500" height="12.500" fill="#111"/><rect x="1106.500" y="678.300" width="7.500" height="5" fill="#fff"/><rect x="1107.500" y="686" width="6" height="4" fill="#d0d0d0"/><rect x="1108.500" y="686.800" width="1.800" height="2.800" fill="#111"/>
</g>

<g>
<text x="179" y="9.6" font-size="11" font-weight="bold" fill="#fff" textLength="232.0" lengthAdjust="spacingAndGlyphs">File ABC.dgn (2D - V8 DGN) - MicroStation V8</text>
<text x="175.6" y="32" font-size="11" font-weight="normal" fill="#2a2a2a" textLength="14.6" lengthAdjust="spacingAndGlyphs"><tspan text-decoration="underline">F</tspan>ile</text>
<text x="202.7" y="32" font-size="11" font-weight="normal" fill="#2a2a2a" textLength="16.8" lengthAdjust="spacingAndGlyphs"><tspan text-decoration="underline">E</tspan>dit</text>
<text x="231" y="32" font-size="11" font-weight="normal" fill="#2a2a2a" textLength="36.0" lengthAdjust="spacingAndGlyphs">E<tspan text-decoration="underline">l</tspan>ement</text>
<text x="279.7" y="32" font-size="11" font-weight="normal" fill="#2a2a2a" textLength="35.3" lengthAdjust="spacingAndGlyphs"><tspan text-decoration="underline">S</tspan>ettings</text>
<text x="327.7" y="32" font-size="11" font-weight="normal" fill="#2a2a2a" textLength="24.3" lengthAdjust="spacingAndGlyphs"><tspan text-decoration="underline">T</tspan>ools</text>
<text x="364.5" y="32" font-size="11" font-weight="normal" fill="#2a2a2a" textLength="30.5" lengthAdjust="spacingAndGlyphs"><tspan text-decoration="underline">U</tspan>tilities</text>
<text x="407" y="32" font-size="11" font-weight="normal" fill="#2a2a2a" textLength="52.0" lengthAdjust="spacingAndGlyphs">Wor<tspan text-decoration="underline">k</tspan>space</text>
<text x="471" y="32" font-size="11" font-weight="normal" fill="#2a2a2a" textLength="37.0" lengthAdjust="spacingAndGlyphs"><tspan text-decoration="underline">W</tspan>indow</text>
<text x="520" y="32" font-size="11" font-weight="normal" fill="#2a2a2a" textLength="21.4" lengthAdjust="spacingAndGlyphs"><tspan text-decoration="underline">H</tspan>elp</text>
<text x="239.4" y="86.9" font-size="11" font-weight="bold" fill="#fff" textLength="31.2" lengthAdjust="spacingAndGlyphs">View 1</text>
<text x="466.4" y="96.2" font-size="11" font-weight="bold" fill="#fff" textLength="57.9" lengthAdjust="spacingAndGlyphs">Manipulate</text>
<text x="926.5" y="69.7" font-size="11" font-weight="bold" fill="#fff" textLength="28.2" lengthAdjust="spacingAndGlyphs">Scale</text>
<text x="628.8" y="59.2" font-size="11" font-weight="normal" fill="#333" textLength="31.2" lengthAdjust="spacingAndGlyphs">Default</text>
<text x="785.9" y="59.2" font-size="11" font-weight="normal" fill="#555" textLength="5.1" lengthAdjust="spacingAndGlyphs">0</text>
<text x="849.7" y="59.2" font-size="11" font-weight="normal" fill="#555" textLength="5.0" lengthAdjust="spacingAndGlyphs">0</text>
<text x="932" y="92.2" font-size="11" font-weight="normal" fill="#222" textLength="36.0" lengthAdjust="spacingAndGlyphs"><tspan text-decoration="underline">M</tspan>ethod:</text>
<text x="979" y="92.2" font-size="11" font-weight="normal" fill="#222" textLength="56.0" lengthAdjust="spacingAndGlyphs">Active Scale</text>
<text x="946.9" y="109.4" font-size="11" font-weight="normal" fill="#222" textLength="36.7" lengthAdjust="spacingAndGlyphs"><tspan text-decoration="underline">X</tspan> Scale:</text>
<text x="946.9" y="126.5" font-size="11" font-weight="normal" fill="#222" textLength="36.7" lengthAdjust="spacingAndGlyphs"><tspan text-decoration="underline">Y</tspan> Scale:</text>
<text x="995.6" y="109.4" font-size="11" font-weight="normal" fill="#444" textLength="30.2" lengthAdjust="spacingAndGlyphs">3.0000</text>
<text x="995.6" y="126.5" font-size="11" font-weight="normal" fill="#444" textLength="30.2" lengthAdjust="spacingAndGlyphs">3.0000</text>
<text x="933.3" y="160.6" font-size="11" font-weight="normal" fill="#222" textLength="50.7" lengthAdjust="spacingAndGlyphs">Make <tspan text-decoration="underline">C</tspan>opy</text>
<text x="933.3" y="178.6" font-size="11" font-weight="normal" fill="#222" textLength="100.3" lengthAdjust="spacingAndGlyphs"><tspan text-decoration="underline">S</tspan>cale Multi-line Offsets</text>
<text x="933.3" y="195.5" font-size="11" font-weight="normal" fill="#a8a89c" textLength="48.4" lengthAdjust="spacingAndGlyphs">Use <tspan text-decoration="underline">F</tspan>ence</text>
<text x="1000.8" y="195.5" font-size="11" font-weight="normal" fill="#a8a89c" textLength="26.1" lengthAdjust="spacingAndGlyphs">Inside</text>
<text x="933.3" y="212.7" font-size="11" font-weight="normal" fill="#a8a89c" textLength="55.0" lengthAdjust="spacingAndGlyphs">Stretch Cells</text>
<text x="194.7" y="659.4" font-size="11" font-weight="normal" fill="#333" textLength="60.3" lengthAdjust="spacingAndGlyphs">Default Views</text>
<text x="498.8" y="659.6" font-size="11" font-weight="normal" fill="#333" textLength="36.0" lengthAdjust="spacingAndGlyphs">40.0864</text>
<text x="674.6" y="659.6" font-size="11" font-weight="normal" fill="#777" textLength="10.8" lengthAdjust="spacingAndGlyphs">Y:</text>
<text x="694.7" y="659.6" font-size="11" font-weight="normal" fill="#333" textLength="37.1" lengthAdjust="spacingAndGlyphs">27.9968</text>
<text x="163.5" y="688" font-size="11" font-weight="normal" fill="#2a2a2a" textLength="276.5" lengthAdjust="spacingAndGlyphs">Scale Element (Copy) &gt; Enter origin point (point to scale about)</text>
<text x="647.8" y="688" font-size="11" font-weight="normal" fill="#2a2a2a" textLength="137.4" lengthAdjust="spacingAndGlyphs">Type=Multi-Line, Level=Default</text>
<text x="849.6" y="688" font-size="11" font-weight="normal" fill="#2a2a2a" textLength="31.2" lengthAdjust="spacingAndGlyphs">Default</text>
<text x="344" y="715.2" font-size="14" font-weight="bold" fill="#fff" textLength="614.4" lengthAdjust="spacingAndGlyphs">ENGINEERS CADD CENTRE PVT. LTD. HYDERABAD, INDIA, WWW.ECCINDIA.ORG</text>
<text x="331.2" y="659.3" font-size="11" text-anchor="middle" fill="#fff">1</text>
<text x="344.3" y="659.3" font-size="11" text-anchor="middle" fill="#333">2</text>
<text x="357.7" y="659.3" font-size="11" text-anchor="middle" fill="#333">3</text>
<text x="371.2" y="659.3" font-size="11" text-anchor="middle" fill="#333">4</text>
<text x="384.59999999999997" y="659.3" font-size="11" text-anchor="middle" fill="#333">5</text>
<text x="397.8" y="659.3" font-size="11" text-anchor="middle" fill="#333">6</text>
<text x="411.0" y="659.3" font-size="11" text-anchor="middle" fill="#333">7</text>
<text x="424.2" y="659.3" font-size="11" text-anchor="middle" fill="#333">8</text>
<text x="462.7" y="63.2" font-size="23" font-weight="bold" text-anchor="middle" fill="#9a10a0" textLength="11.5" lengthAdjust="spacingAndGlyphs">?</text>
<text x="201.6" y="203.6" font-size="16" text-anchor="middle" fill="#8c1420" textLength="12.8" lengthAdjust="spacingAndGlyphs" stroke="#8c1420" stroke-width="0.5">A</text>
<text x="483" y="660" font-size="12" text-anchor="middle" fill="#777">X</text>
</g>
</svg>
</body></html>
